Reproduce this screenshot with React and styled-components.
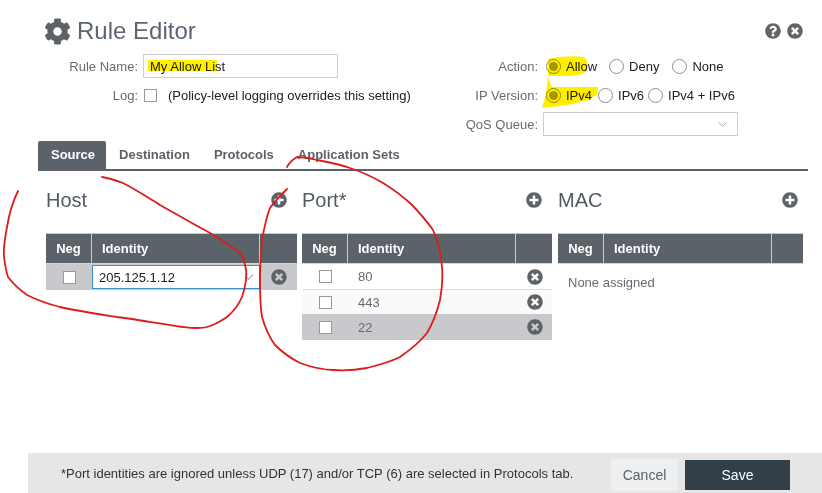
import React from 'react';
import styled, { createGlobalStyle } from 'styled-components';
import { FaCog, FaTimesCircle, FaPlusCircle, FaQuestionCircle } from 'react-icons/fa';
import { FiChevronDown } from 'react-icons/fi';

const Global = createGlobalStyle`
  html, body { margin: 0; padding: 0; background: #fff; }
  * { box-sizing: border-box; }
`;
const Page = styled.div`
  position: relative; width: 822px; height: 493px; overflow: hidden;
  display: flex; flex-direction: column; background: #fff;
  font-family: "Liberation Sans", Arial, sans-serif; font-size: 13px; color: #1f2a33;
`;
const Header = styled.header`
  display: flex; align-items: center; height: 34px; margin-top: 14px; padding: 0 19px 0 44px; gap: 6px;
  color: #5c6269;
`;
const Title = styled.h1`
  margin: 0; flex: 1; font-size: 24px; font-weight: 400; color: #5c6670;
`;
const HeadIcons = styled.div`display: flex; gap: 6px; color: #646464;`;
const Form = styled.div`display: flex; margin-top: 6px;`;
const LeftForm = styled.div`display: flex; flex-direction: column; gap: 5px; width: 338px; flex: none;`;
const RightForm = styled.div`display: flex; flex-direction: column; gap: 5px; margin-left: 60px;`;
const Row = styled.div`display: flex; align-items: center; height: 24px; white-space: nowrap;`;
const Label = styled.label`
  width: ${p => p.$w}px; text-align: right; padding-right: 5px; color: #666b72; flex: none;
`;
const TextInput = styled.div`
  width: 195px; height: 24px; border: 1px solid #cfcfcf; display: flex; align-items: center; padding-left: 6px;
  color: #222;
`;
const Check = styled.span`
  display: block; width: 13px; height: 13px; border: 1px solid #999; background: #fff; flex: none;
`;
const LogCheck = styled(Check)`margin-left: 1px;`;
const LogNote = styled.span`margin-left: 11px; color: #222;`;
const Radio = styled.span`
  width: 15px; height: 15px; flex: none; border-radius: 50%; border: 1px solid #8f8f8f; background: #fff;
  display: flex; align-items: center; justify-content: center; margin-left: ${p => p.$ml ?? 0}px;
  &::after { content: ''; width: 9px; height: 9px; border-radius: 50%; background: ${p => p.$on ? '#a3a3a3' : 'transparent'}; }
`;
const RadioText = styled.span`margin-left: ${p => p.$ml ?? 5}px; color: #222; white-space: nowrap;`;
const Select = styled.div`
  width: 195px; height: 24px; border: 1px solid #cfcfcf; display: flex; align-items: center; justify-content: flex-end;
  padding-right: 7px; color: #a8a8a8;
`;
const Tabs = styled.nav`
  display: flex; margin: 5px 14px 0 38px; height: 30px; border-bottom: 2px solid #5c6269;
`;
const Tab = styled.div`
  height: 28px; line-height: 27px; padding: ${p => p.$active ? '0 11px 0 13px' : '0'}; margin-right: ${p => p.$mr ?? 0}px;
  font-weight: 700; font-size: 13px; border-radius: 2px 2px 0 0; white-space: nowrap;
  background: ${p => p.$active ? '#5c6269' : 'transparent'};
  color: ${p => p.$active ? '#fff' : '#5c6269'};
`;
const Columns = styled.div`display: flex; margin: 14px 0 0 46px;`;
const Column = styled.section`width: ${p => p.$w}px; margin-right: ${p => p.$mr ?? 0}px; flex: none;`;
const ColHead = styled.div`
  display: flex; align-items: center; justify-content: space-between; height: 30px; padding-right: ${p => p.$pr}px;
  margin-bottom: 18px; color: #5c6269;
`;
const ColTitle = styled.h2`margin: 0; font-size: 20px; font-weight: 400; color: #4f5b66;`;
const TableHead = styled.div`
  display: grid; grid-template-columns: 46px 1fr ${p => p.$last}px; height: 31px;
  background: #5c6269; border-top: 1px solid #c9c9c9; border-bottom: 1px solid #d8d8d8;
  color: #fff; font-weight: 700; font-size: 13px;
`;
const Th = styled.div`
  display: flex; align-items: center; padding-left: ${p => p.$pl ?? 0}px;
  justify-content: ${p => p.$center ? 'center' : 'flex-start'};
  border-right: ${p => p.$end ? 0 : '1px solid #c9c9c9'};
`;
const TableRow = styled.div`
  display: grid; grid-template-columns: 46px 1fr 36px; align-items: center; height: ${p => p.$h ?? 25}px;
  background: ${p => p.$bg ?? '#fff'}; border-bottom: ${p => p.$line ? '1px solid #dcdcdc' : '0'};
  color: #666b72;
`;
const Cell = styled.div`
  display: flex; align-items: center; justify-content: ${p => p.$center ? 'center' : 'flex-start'};
  padding-left: ${p => p.$pl ?? 0}px; color: inherit;
`;
const RemoveIcon = styled.span`display: flex; color: #5f6368;`;
const EditInput = styled.div`
  position: relative; width: 168px; height: 24px; border: 1px solid #3a8fd0; background: #fff;
  display: flex; align-items: center; padding-left: 6px; color: #222;
  &::after {
    content: ''; position: absolute; right: 6px; top: 8px; width: 6px; height: 3px;
    border-left: 1px solid #aaa; border-bottom: 1px solid #aaa; transform: rotate(-45deg);
  }
`;
const None = styled.div`padding: 11px 0 0 10px; color: #666b72;`;
const Footer = styled.footer`
  position: absolute; left: 28px; right: 0; bottom: 0; height: 40px; background: #e6e6e6;
  display: flex; align-items: center; padding-left: 33px; font-size: 13px; color: #333;
`;
const Note = styled.span`width: 550px; flex: none; white-space: nowrap;`;
const Cancel = styled.div`
  width: 67px; height: 32px; margin-top: 3px; background: #eeeff1; color: #5c6269; font-size: 14px;
  display: flex; align-items: center; justify-content: center;
`;
const Save = styled.div`
  width: 105px; height: 30px; margin: 3px 0 0 7px; background: #333f48; color: #fff; font-size: 14px;
  display: flex; align-items: center; justify-content: center;
`;
const Overlay = styled.svg`position: absolute; inset: 0; pointer-events: none;`;
const Highlights = styled.svg`position: absolute; inset: 0; pointer-events: none; mix-blend-mode: multiply;`;

const Remove = () => <RemoveIcon><FaTimesCircle size={16} /></RemoveIcon>;
const rows = [['80', '#fff', 26, true], ['443', '#fafafa', 24, false], ['22', '#c8c9cd', 26, false]];

export default function App() {
  return (
    <Page>
      <Global />
      <Header>
        <FaCog size={27} />
        <Title>Rule Editor</Title>
        <HeadIcons><FaQuestionCircle size={16} /><FaTimesCircle size={16} /></HeadIcons>
      </Header>
      <Form>
        <LeftForm>
          <Row><Label $w={143}>Rule Name:</Label><TextInput>My Allow List</TextInput></Row>
          <Row><Label $w={143}>Log:</Label><LogCheck /><LogNote>(Policy-level logging overrides this setting)</LogNote></Row>
        </LeftForm>
        <RightForm>
          <Row><Label $w={145}>Action:</Label><Radio $on $ml={3} /><RadioText>Allow</RadioText><Radio $ml={12} /><RadioText>Deny</RadioText><Radio $ml={13} /><RadioText>None</RadioText></Row>
          <Row><Label $w={145}>IP Version:</Label><Radio $on $ml={3} /><RadioText>IPv4</RadioText><Radio $ml={6} /><RadioText>IPv6</RadioText><Radio $ml={4} /><RadioText>IPv4 + IPv6</RadioText></Row>
          <Row><Label $w={145}>QoS Queue:</Label><Select><FiChevronDown size={15} strokeWidth={1.5} /></Select></Row>
        </RightForm>
      </Form>
      <Tabs>
        <Tab $active $mr={13}>Source</Tab>
        <Tab $mr={24}>Destination</Tab>
        <Tab $mr={24}>Protocols</Tab>
        <Tab>Application Sets</Tab>
      </Tabs>
      <Columns>
        <Column $w={251} $mr={5}>
          <ColHead $pr={10}><ColTitle>Host</ColTitle><FaPlusCircle size={16} /></ColHead>
          <TableHead $last={37}>
            <Th $center>Neg</Th><Th $pl={10}>Identity</Th><Th $end />
          </TableHead>
          <TableRow $bg="#c8c9cd" $h={26}>
            <Cell $center><Check /></Cell>
            <EditInput>205.125.1.12</EditInput>
            <Cell $center><Remove /></Cell>
          </TableRow>
        </Column>
        <Column $w={250} $mr={6}>
          <ColHead $pr={10}><ColTitle>Port*</ColTitle><FaPlusCircle size={16} /></ColHead>
          <TableHead $last={36}>
            <Th $center>Neg</Th><Th $pl={10}>Identity</Th><Th $end />
          </TableHead>
          {rows.map(([v, bg, h, line]) => (
            <TableRow key={v} $bg={bg} $h={h} $line={line}>
              <Cell $center><Check /></Cell>
              <Cell $pl={10}>{v}</Cell>
              <Cell $center $pl={2}><Remove /></Cell>
            </TableRow>
          ))}
        </Column>
        <Column $w={245}>
          <ColHead $pr={5}><ColTitle>MAC</ColTitle><FaPlusCircle size={16} /></ColHead>
          <TableHead $last={31}>
            <Th $center>Neg</Th><Th $pl={10}>Identity</Th><Th $end />
          </TableHead>
          <None>None assigned</None>
        </Column>
      </Columns>
      <Footer>
        <Note>*Port identities are ignored unless UDP (17) and/or TCP (6) are selected in Protocols tab.</Note>
        <Cancel>Cancel</Cancel>
        <Save>Save</Save>
      </Footer>
      <Highlights width="822" height="493" viewBox="0 0 822 493">
        <path fill="#ffee00" d="M148 60H217V71H148Z" />
        <path fill="#ffee00" d="M548 59Q565 55 584 57Q590 62 586 72Q580 76 565 76L548 76Z" />
        <path fill="#ffee00" d="M548 77L552 87H598L597 95L585 101L568 105L542 108L546 94Z" />
      </Highlights>
      <Overlay width="822" height="493" viewBox="0 0 822 493" fill="none" stroke="#dd1c1c" strokeWidth="1.8" strokeLinecap="round" strokeLinejoin="round">
        <path d="M18 191C12 203 9 215 7 227C5 238 3 248 4 257C5 265 6 271 8 277C14 285 20 290 27 295C37 300 48 304 60 307C78 311 98 314 117 317C140 320 162 324 183 327C192 328 200 329 207 327C215 325 221 321 227 317C234 311 239 304 242 297C245 288 247 279 246 270C245 263 243 257 240 253C231 246 220 239 210 233C193 224 176 214 160 205C147 197 135 189 123 183C115 180 108 178 102 177" />
        <path d="M287 189C281 195 275 201 270 208C266 218 264 229 262 240C261 253 260 267 260 280C260 293 260 305 262 317C265 327 269 337 275 345C282 352 290 358 300 363C311 367 322 370 333 370C345 371 356 370 367 368C379 365 390 362 400 357C410 350 420 342 427 333C433 323 437 312 440 300C442 289 443 278 442 267C441 254 438 241 433 230C426 220 418 211 410 203C402 196 393 189 383 183C373 177 362 172 350 168C339 164 328 162 317 160C310 158 303 157 297 157C292 160 289 163 287 167" />
      </Overlay>
    </Page>
  );
}
